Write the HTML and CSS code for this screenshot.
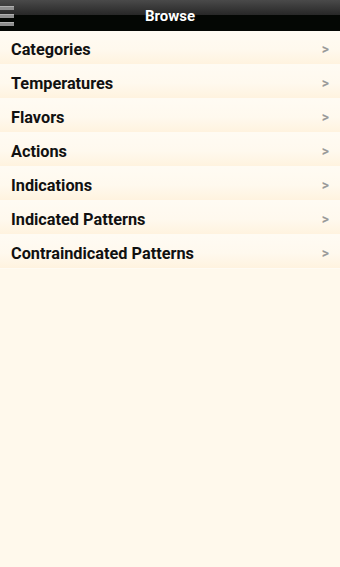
FILE: index.html
```html
<!DOCTYPE html>
<html lang="en">
<head>
  <meta charset="UTF-8" />
  <meta name="viewport" content="width=device-width, initial-scale=1" />
  <title>Browse</title>
  <link rel="stylesheet" href="styles.css">
</head>
<body>

  <div class="header">
    <div class="menu-btn">
      <span></span>
      <span></span>
      <span></span>
    </div>
    <div class="title">Browse</div>
  </div>

  <ul class="list">
    <li><span>Categories</span><span class="arrow">&gt;</span></li>
    <li><span>Temperatures</span><span class="arrow">&gt;</span></li>
    <li><span>Flavors</span><span class="arrow">&gt;</span></li>
    <li><span>Actions</span><span class="arrow">&gt;</span></li>
    <li><span>Indications</span><span class="arrow">&gt;</span></li>
    <li><span>Indicated Patterns</span><span class="arrow">&gt;</span></li>
    <li><span>Contraindicated Patterns</span><span class="arrow">&gt;</span></li>
  </ul>

</body>
</html>
```

FILE: styles.css
```css
body {
  margin: 0;
  background-color: #fff9ec;
  font-family: Roboto, "Liberation Sans", sans-serif;
  height: 100vh;
  overflow: hidden;
}

.header {
  position: relative;
  height: 31px;
  background: linear-gradient(to bottom, #4a4a4a 0%, #262626 50%, #040704 50%, #040704 100%);
  display: flex;
  align-items: center;
  justify-content: center;
}

.menu-btn {
  position: absolute;
  left: 0;
  top: 6px;
  display: flex;
  flex-direction: column;
  gap: 4px;
}

.menu-btn span {
  display: block;
  width: 14px;
  height: 4px;
  background: #8e8e8e;
  border-top: 1px solid #b0b0b0;
  box-sizing: border-box;
}

.title {
  color: #fff;
  font-weight: bold;
  font-size: 15px;
  margin-top: 1px;
}

.list {
  list-style: none;
  margin: 0;
  padding: 0;
}

.list li {
  height: 34px;
  box-sizing: border-box;
  display: flex;
  align-items: center;
  justify-content: space-between;
  padding: 3px 11px 0 11px;
  background: linear-gradient(to bottom, #fffbf3 0%, #fff9ee 55%, #fff3df 100%);
  border-bottom: 1px solid #fffbf3;
  font-size: 16.3px;
  font-weight: bold;
  color: #111;
}

.list li .arrow {
  color: #9a9a9a;
  font-size: 14px;
  font-weight: bold;
  margin-right: 0;
}
```
